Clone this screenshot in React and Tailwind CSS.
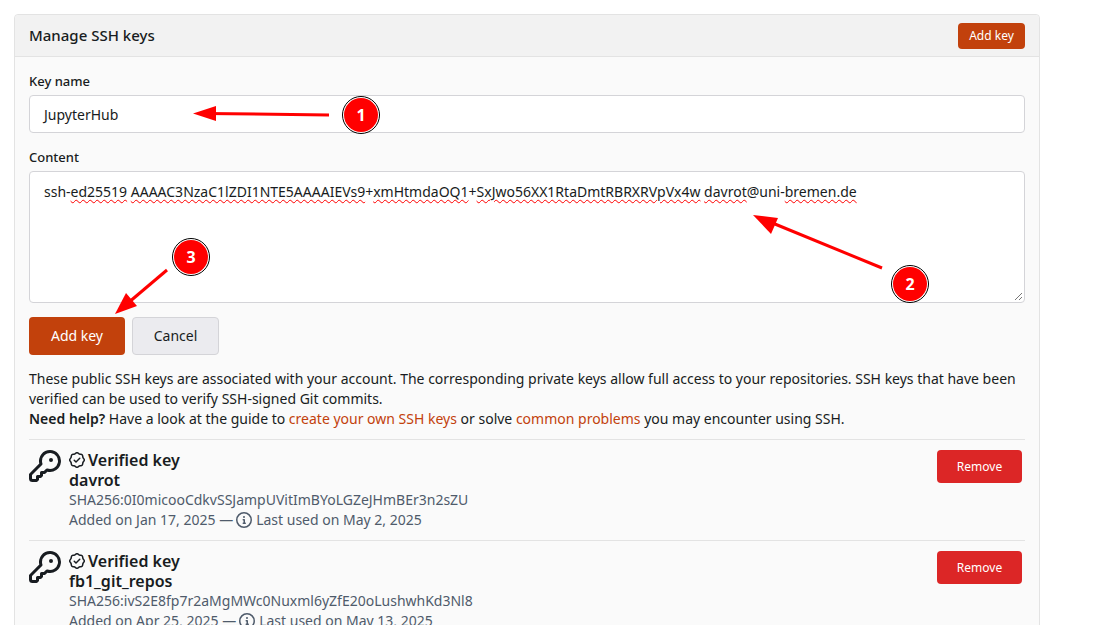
const keyPath = 'M10.5 0a5.499 5.499 0 1 1-1.288 10.848l-.932.932a.75.75 0 0 1-.53.22H7v.75a.75.75 0 0 1-.22.53l-.5.5a.75.75 0 0 1-.53.22H5v.75a.75.75 0 0 1-.22.53l-.5.5a.75.75 0 0 1-.53.22h-2A1.75 1.75 0 0 1 0 14.25v-2c0-.199.079-.389.22-.53l4.932-4.932A5.5 5.5 0 0 1 10.5 0Zm-4 5.5c-.001.431.069.86.205 1.269a.75.75 0 0 1-.181.768L1.5 12.56v1.69c0 .138.112.25.25.25h1.69l.06-.06v-1.19a.75.75 0 0 1 .75-.75h1.19l.06-.06v-1.19a.75.75 0 0 1 .75-.75h1.19l1.023-1.025a.75.75 0 0 1 .768-.18A4 4 0 1 0 6.5 5.5ZM11 6a1 1 0 1 1 0-2 1 1 0 0 1 0 2Z';
const verifiedPath = 'm9.585.52.929.68c.153.112.331.186.518.215l1.138.175a2.678 2.678 0 0 1 2.24 2.24l.174 1.139c.029.187.103.365.215.518l.68.928a2.677 2.677 0 0 1 0 3.17l-.68.928a1.174 1.174 0 0 0-.215.518l-.175 1.138a2.678 2.678 0 0 1-2.241 2.241l-1.138.175a1.17 1.17 0 0 0-.518.215l-.928.68a2.677 2.677 0 0 1-3.17 0l-.928-.68a1.174 1.174 0 0 0-.518-.215L3.83 14.41a2.678 2.678 0 0 1-2.24-2.24l-.175-1.138a1.17 1.17 0 0 0-.215-.518l-.68-.928a2.677 2.677 0 0 1 0-3.17l.68-.928c.112-.153.186-.331.215-.518l.175-1.14a2.678 2.678 0 0 1 2.24-2.24l1.139-.175c.187-.029.365-.103.518-.215l.928-.68a2.677 2.677 0 0 1 3.17 0ZM7.303 1.728l-.927.68a2.67 2.67 0 0 1-1.18.489l-1.137.174a1.179 1.179 0 0 0-.987.987l-.174 1.136a2.677 2.677 0 0 1-.489 1.18l-.68.928a1.18 1.18 0 0 0 0 1.394l.68.927c.256.348.424.753.489 1.18l.174 1.137c.078.509.478.909.987.987l1.136.174a2.67 2.67 0 0 1 1.18.489l.928.68c.414.305.979.305 1.394 0l.927-.68a2.67 2.67 0 0 1 1.18-.489l1.137-.174a1.18 1.18 0 0 0 .987-.987l.174-1.136a2.67 2.67 0 0 1 .489-1.18l.68-.928a1.176 1.176 0 0 0 0-1.394l-.68-.927a2.686 2.686 0 0 1-.489-1.18l-.174-1.137a1.179 1.179 0 0 0-.987-.987l-1.136-.174a2.677 2.677 0 0 1-1.18-.489l-.928-.68a1.176 1.176 0 0 0-1.394 0ZM11.28 6.78l-3.75 3.75a.75.75 0 0 1-1.06 0L4.72 8.78a.75.75 0 0 1 1.06-1.06l1.22 1.22 3.22-3.22a.75.75 0 0 1 1.06 1.06Z';
const infoPath = 'M0 8a8 8 0 1 1 16 0A8 8 0 0 1 0 8Zm8-6.5a6.5 6.5 0 1 0 0 13 6.5 6.5 0 0 0 0-13ZM6.5 7.75A.75.75 0 0 1 7.25 7h1a.75.75 0 0 1 .75.75v2.75h.25a.75.75 0 0 1 0 1.5h-2a.75.75 0 0 1 0-1.5h.25v-2h-.25a.75.75 0 0 1-.75-.75ZM8 6a1 1 0 1 1 0-2 1 1 0 0 1 0 2Z';

const Icon = ({ d, size }) => (
  <svg width={size} height={size} viewBox="0 0 16 16" fill="currentColor" className="shrink-0">
    <path d={d} />
  </svg>
);

const Typo = ({ children }) => (
  <span className="underline decoration-wavy decoration-[#ff0000] decoration-1 underline-offset-2">{children}</span>
);

const KeyRow = ({ name, fingerprint, added, used }) => (
  <div className="flex items-start border-t border-[#e3e3e3] pt-[10px] h-[101px]">
    <div className="w-[40px] h-[33px] shrink-0 text-[#181c21]">
      <Icon d={keyPath} size={32} />
    </div>
    <div className="flex-1 leading-[20px]">
      <div className="flex items-center gap-[3px] text-[16px] font-semibold h-[20px]">
        <Icon d={verifiedPath} size={16} />
        <span>Verified key</span>
      </div>
      <div className="text-[16px] font-semibold h-[20px]">{name}</div>
      <div className="text-[#4f5b6b] h-[20px]">{fingerprint}</div>
      <div className="flex items-center gap-[3px] text-[#4f5b6b] h-[20px]">
        <span>Added on {added} —</span>
        <Icon d={infoPath} size={16} />
        <span className="ml-[1px]">Last used on {used}</span>
      </div>
    </div>
    <button className="w-[85px] h-[33px] mr-[3px] rounded-[4px] bg-[#dc2626] text-white text-[12px]">Remove</button>
  </div>
);

const Badge = ({ n, className }) => (
  <div className={`absolute w-[38px] h-[38px] rounded-full border border-black bg-white p-[1px] ${className}`}>
    <div className="w-full h-full rounded-full bg-[#ff0000] flex items-center justify-center text-white text-[16px] font-bold">
      {n}
    </div>
  </div>
);

const Annotations = () => (
  <>
    <svg width="1118" height="625" className="absolute left-0 top-0 pointer-events-none">
      <g fill="#ff0000" stroke="#ff0000">
        <line x1="329" y1="115" x2="205" y2="113.5" strokeWidth="3" />
        <polygon points="193,113.5 216,106 216,121" strokeWidth="0" />
        <line x1="882" y1="268" x2="770" y2="222" strokeWidth="3" />
        <polygon points="753,215 778,218 771,234" strokeWidth="0" />
        <line x1="167" y1="270" x2="128" y2="303" strokeWidth="3" />
        <polygon points="115,314 126,293 137,306" strokeWidth="0" />
      </g>
    </svg>
    <Badge n="1" className="left-[342px] top-[96px]" />
    <Badge n="2" className="left-[891px] top-[265px]" />
    <Badge n="3" className="left-[172px] top-[238px]" />
  </>
);

export default function App() {
  return (
    <div className="relative h-[625px] overflow-hidden bg-white text-[14px] leading-[20px] text-[#181c21] font-['Noto_Sans',sans-serif]">
      <div className="ml-[14px] mt-[14px] w-[1026px] inline-block rounded-[4px] border border-[#e3e3e3] bg-[#fafafa]">
        <div className="flex items-center justify-between h-[42px] px-[14px] bg-[#f2f2f2] border-b border-[#e3e3e3] rounded-t-[4px]">
          <h4 className="text-[15px] font-medium mb-[1px]">Manage SSH keys</h4>
          <button className="w-[67px] h-[26px] rounded-[4px] bg-[#c2410c] text-white text-[12px]">Add key</button>
        </div>

        <div className="px-[14px] pt-[14px]">
          <label className="block text-[13px] font-medium h-[24px] leading-[20px]">Key name</label>
          <div className="flex items-center h-[38px] pt-[1px] rounded-[4px] border border-[#d4d4d8] bg-white px-[14px]">JupyterHub</div>

          <label className="block text-[13px] font-medium h-[24px] leading-[20px] mt-[14px]">Content</label>
          <div className="relative h-[132px] rounded-[4px] border border-[#d4d4d8] bg-white px-[14px] pt-[9px] leading-[22px]">
            ssh-<Typo>ed25519</Typo> <Typo>AAAAC3NzaC1lZDI1NTE5AAAAIEVs9</Typo>+<Typo>xmHtmdaOQ1</Typo>+<Typo>SxJwo56XX1RtaDmtRBRXRVpVx4w</Typo> <Typo>davrot</Typo>@uni-<Typo>bremen.de</Typo>
            <svg width="10" height="10" className="absolute right-[1px] bottom-[1px]" stroke="#777" fill="none">
              <path d="M2 9 9 2M6 9 9 6" />
            </svg>
          </div>

          <div className="flex gap-[7px] mt-[14px]">
            <button className="w-[96px] h-[38px] rounded-[4px] bg-[#c2410c] text-white">Add key</button>
            <button className="w-[87px] h-[38px] rounded-[4px] border border-[#d4d4d8] bg-[#ebebef]">Cancel</button>
          </div>

          <p className="mt-[14px] mb-[10px]">
            These public SSH keys are associated with your account. The corresponding private keys allow full access to your repositories. SSH keys that have been verified can be used to verify SSH-signed Git commits.
            <br />
            <b className="font-semibold">Need help?</b> Have a look at the guide to <a className="text-[#c2410c]">create your own SSH keys</a> or solve <a className="text-[#c2410c]">common problems</a> you may encounter using SSH.
          </p>

          <KeyRow name="davrot" fingerprint="SHA256:0I0micooCdkvSSJampUVitImBYoLGZeJHmBEr3n2sZU" added="Jan 17, 2025" used="May 2, 2025" />
          <KeyRow name="fb1_git_repos" fingerprint="SHA256:ivS2E8fp7r2aMgMWc0Nuxml6yZfE20oLushwhKd3Nl8" added="Apr 25, 2025" used="May 13, 2025" />
        </div>
      </div>
      <Annotations />
    </div>
  );
}
